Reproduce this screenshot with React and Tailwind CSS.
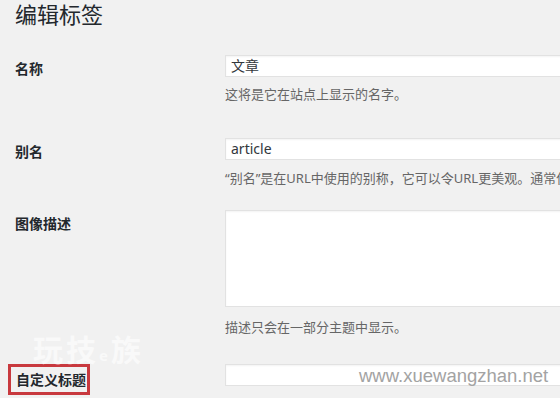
const FONT = "font-['Noto_Sans','Noto_Sans_CJK_SC',sans-serif]";

function Row({ label, top, children, labelBox }) {
  return (
    <div className={`flex ${top}`}>
      <div className="w-[225px] shrink-0">
        {labelBox ? (
          <div className="ml-[8px] w-[82px] h-[31px] border-[3px] border-[#c8393e] pl-[5px] pt-[3px] text-[14px] font-bold leading-[20px] text-[#23282d]">
            {label}
          </div>
        ) : (
          <div className="pl-[15px] pt-[4px] text-[14px] font-bold leading-[20px] text-[#23282d]">{label}</div>
        )}
      </div>
      <div className="flex-1 min-w-0">{children}</div>
    </div>
  );
}

function Input({ value }) {
  return (
    <div className="w-[420px] h-[22px] bg-white border border-[#e2e2e2] shadow-[inset_0_1px_2px_rgba(0,0,0,0.05)] px-[5px] text-[14px] leading-[20px] text-[#32373c]">
      {value}
    </div>
  );
}

export default function App() {
  return (
    <div className={`relative w-[560px] h-[398px] overflow-hidden bg-[#f1f1f1] ${FONT}`}>
      <h1 className="pl-[15px] pt-0 text-[22px] font-normal leading-[28px] text-[#23282d]">编辑标签</h1>

      <Row label="名称" top="mt-[27px]">
        <Input value="文章" />
        <p className="mt-[8px] text-[13px] leading-[18px] text-[#666]">这将是它在站点上显示的名字。</p>
      </Row>

      <Row label="别名" top="mt-[35px]">
        <Input value="article" />
        <p className="mt-[9px] whitespace-nowrap text-[13px] leading-[18px] text-[#666]">
          “别名”是在URL中使用的别称，它可以令URL更美观。通常使用小写，只能包含字母、数字和连字符（-）。
        </p>
      </Row>

      <Row label="图像描述" top="mt-[23px]">
        <div className="w-[420px] h-[97px] bg-white border border-[#e2e2e2] shadow-[inset_0_1px_2px_rgba(0,0,0,0.05)]" />
        <p className="mt-[11px] text-[13px] leading-[18px] text-[#666]">描述只会在一部分主题中显示。</p>
      </Row>

      <Row label="自定义标题" top="mt-[28px]" labelBox>
        <Input value="" />
      </Row>

      <div className="absolute left-[33px] top-[333px] text-[30px] font-bold leading-[34px] tracking-[3px] text-white/60">
        玩技<span className="text-[15px]">e</span>族
      </div>
      <div className="absolute left-[359px] top-[365px] font-['Liberation_Sans',sans-serif] text-[18.5px] leading-[22px] text-[#a3a3a3]">
        www.xuewangzhan.net
      </div>
    </div>
  );
}
